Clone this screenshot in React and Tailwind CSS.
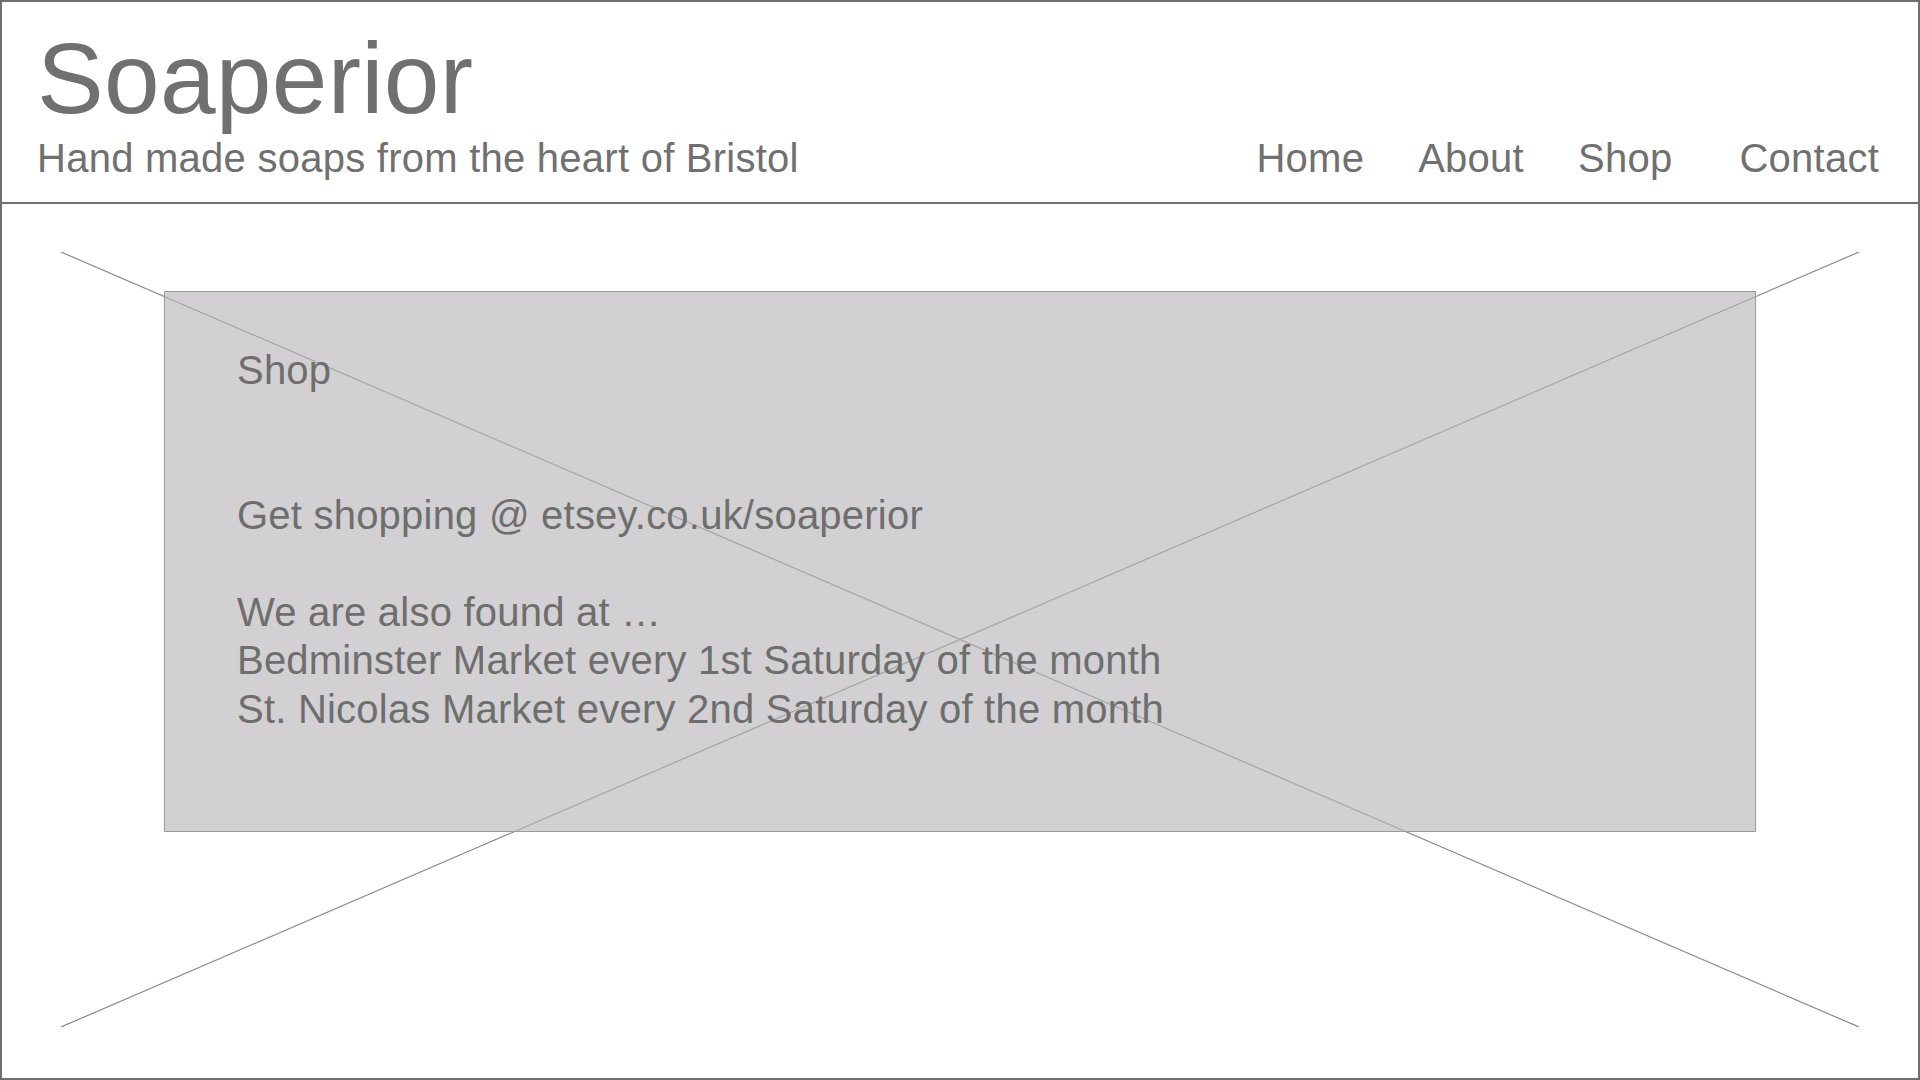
import React from 'react';

const font = { fontFamily: '"Liberation Sans", Arial, Helvetica, sans-serif' };

const navItems = [
  { label: 'Home', gap: 'ml-0' },
  { label: 'About', gap: 'ml-[54px]' },
  { label: 'Shop', gap: 'ml-[54px]' },
  { label: 'Contact', gap: 'ml-[67px]' }
];

const lines = [
  'Shop',
  '',
  '',
  'Get shopping @ etsey.co.uk/soaperior',
  '',
  'We are also found at …',
  'Bedminster Market every 1st Saturday of the month',
  'St. Nicolas Market every 2nd Saturday of the month'
];

const Header = () => (
  <header className="h-[202px] shrink-0 border-b-2 border-[#707070] pl-[35px] pr-[39px] pb-[24px] flex items-end justify-between">
    <div className="flex flex-col">
      <h1 className="text-[100px] leading-none tracking-[0.3px] text-[#707070] font-normal">Soaperior</h1>
      <p className="mt-[10px] text-[40px] leading-[40px] tracking-[0.25px] text-[#707070]">
        Hand made soaps from the heart of Bristol
      </p>
    </div>
    <nav className="flex text-[40px] leading-[40px] tracking-[0.25px] text-[#707070]">
      {navItems.map(item => (
        <a key={item.label} href="#" className={item.gap}>
          {item.label}
        </a>
      ))}
    </nav>
  </header>
);

// wireframe image placeholder: a cross behind a translucent panel
const Placeholder = ({ children }) => (
  <div className="relative flex-1">
    <svg
      className="absolute inset-0 w-full h-full"
      viewBox="0 0 1798 775"
      preserveAspectRatio="none"
    >
      <line x1="0" y1="0" x2="1798" y2="775" stroke="#8a8a8a" strokeWidth="1.2" vectorEffect="non-scaling-stroke" />
      <line x1="1798" y1="0" x2="0" y2="775" stroke="#8a8a8a" strokeWidth="1.2" vectorEffect="non-scaling-stroke" />
    </svg>
    {children}
  </div>
);

export default function App() {
  return (
    <div style={font} className="w-full h-[1080px] border-2 border-[#707070] bg-white flex flex-col overflow-hidden">
      <Header />
      <main className="flex-1 flex px-[59px] pt-[48px] pb-[51px]">
        <Placeholder>
          <section className="relative mx-[103px] mt-[39px] h-[541px] border border-[#9a9a9a] bg-[rgba(183,180,183,0.63)] pl-[72px] pt-[54px]">
            <div className="text-[40px] leading-[48.4px] tracking-[0.22px] text-[#6e6e6e]">
              {lines.map((line, i) => (
                <div key={i} className="h-[48.4px] whitespace-pre">
                  {line}
                </div>
              ))}
            </div>
          </section>
        </Placeholder>
      </main>
    </div>
  );
}
